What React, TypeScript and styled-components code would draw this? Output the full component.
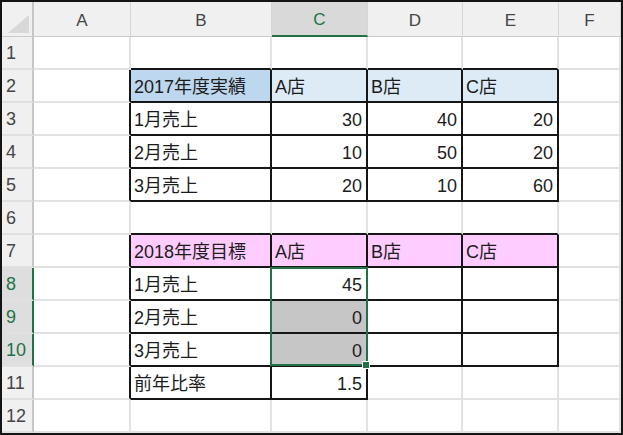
import React from "react";
import styled, { createGlobalStyle } from "styled-components";

const GREEN = "#217346";
const GRID = "#e2e2e2";
const INK = "#161616";

const GlobalStyle = createGlobalStyle`
  html, body {
    margin: 0;
    padding: 0;
    background: #ffffff;
  }
  * {
    box-sizing: border-box;
  }
`;

const Sheet = styled.div`
  position: relative;
  width: 623px;
  height: 435px;
  border: 2px solid #141414;
  display: grid;
  grid-template-columns: 32px 97px 141px 96px 95px 96px 62px;
  grid-template-rows: 35px repeat(12, 33px);
  background: #ffffff;
  overflow: hidden;
  font-family: "Liberation Sans", "Noto Sans CJK JP", sans-serif;
`;

const Corner = styled.div`
  background: #f0f0f0;
  border-right: 2px solid #c6c6c6;
  border-bottom: 1px solid #c9c9c9;
`;

const ColHeader = styled.div<{ $selected?: boolean }>`
  display: flex;
  align-items: center;
  justify-content: center;
  padding-top: 3px;
  background: ${(p) => (p.$selected ? "#d9d9d9" : "#f0f0f0")};
  border-right: 1px solid #d6d6d6;
  border-bottom: ${(p) =>
    p.$selected ? `2px solid ${GREEN}` : "1px solid #c9c9c9"};
  color: ${(p) => (p.$selected ? GREEN : "#454545")};
  font-size: 17px;
`;

const RowHeader = styled.div<{ $selected?: boolean }>`
  display: flex;
  align-items: center;
  padding: 2px 0 0 4px;
  background: ${(p) => (p.$selected ? "#dedede" : "#f0f0f0")};
  border-right: 2px solid ${(p) => (p.$selected ? GREEN : "#c6c6c6")};
  border-bottom: 2px solid #e0e0e0;
  color: ${(p) => (p.$selected ? GREEN : "#454545")};
  font-size: 18px;
`;

const Cell = styled.div<{
  $fill?: string;
  $num?: boolean;
  $edgeRight?: boolean;
  $edgeBottom?: boolean;
}>`
  display: flex;
  align-items: center;
  justify-content: ${(p) => (p.$num ? "flex-end" : "flex-start")};
  padding: 3px 4px 0 3px;
  background: ${(p) => p.$fill || "#ffffff"};
  border-right: 2px solid ${(p) => (p.$edgeRight ? INK : GRID)};
  border-bottom: 2px solid ${(p) => (p.$edgeBottom ? INK : GRID)};
  color: #1c1c1c;
  font-size: 18px;
  line-height: 1;
  white-space: nowrap;
`;

const Selection = styled.div`
  position: absolute;
  left: 268px;
  top: 265px;
  width: 98px;
  height: 99px;
  border: 2px solid ${GREEN};
  pointer-events: none;
`;

const FillHandle = styled.div`
  position: absolute;
  right: -4px;
  bottom: -5px;
  width: 8px;
  height: 8px;
  background: ${GREEN};
  border: 1px solid #ffffff;
`;

const COLS = ["A", "B", "C", "D", "E", "F"];

type CellData = { v: string | number; fill?: string };

const BLUE_DARK = "#bdd7ee";
const BLUE = "#ddebf7";
const PINK = "#ffccff";
const GRAY = "#c6c6c6";

const DATA: Record<string, CellData> = {
  B2: { v: "2017年度実績", fill: BLUE_DARK },
  C2: { v: "A店", fill: BLUE },
  D2: { v: "B店", fill: BLUE },
  E2: { v: "C店", fill: BLUE },
  B3: { v: "1月売上" },
  C3: { v: 30 },
  D3: { v: 40 },
  E3: { v: 20 },
  B4: { v: "2月売上" },
  C4: { v: 10 },
  D4: { v: 50 },
  E4: { v: 20 },
  B5: { v: "3月売上" },
  C5: { v: 20 },
  D5: { v: 10 },
  E5: { v: 60 },
  B7: { v: "2018年度目標", fill: PINK },
  C7: { v: "A店", fill: PINK },
  D7: { v: "B店", fill: PINK },
  E7: { v: "C店", fill: PINK },
  B8: { v: "1月売上" },
  C8: { v: 45 },
  B9: { v: "2月売上" },
  C9: { v: 0, fill: GRAY },
  B10: { v: "3月売上" },
  C10: { v: 0, fill: GRAY },
  B11: { v: "前年比率" },
  C11: { v: 1.5 },
};

// bordered ranges, column index 0 = A
const TABLES = [
  { r1: 2, r2: 5, c1: 1, c2: 4 },
  { r1: 7, r2: 10, c1: 1, c2: 4 },
  { r1: 11, r2: 11, c1: 1, c2: 2 },
];

const inTable = (r: number, c: number) =>
  TABLES.some((t) => r >= t.r1 && r <= t.r2 && c >= t.c1 && c <= t.c2);

const SELECTED_ROWS = [8, 9, 10];
const ROWS = Array.from({ length: 12 }, (_, i) => i + 1);

const CornerMark = () => (
  <svg width="30" height="34" viewBox="0 0 30 34">
    <polygon points="6,31 27,31 27,13" fill="#d8d8d8" />
  </svg>
);

const App: React.FC = () => {
  return (
    <>
      <GlobalStyle />
      <Sheet>
        <Corner>
          <CornerMark />
        </Corner>
        {COLS.map((c) => (
          <ColHeader key={c} $selected={c === "C"}>
            {c}
          </ColHeader>
        ))}
        {ROWS.map((r) => (
          <React.Fragment key={r}>
            <RowHeader $selected={SELECTED_ROWS.includes(r)}>{r}</RowHeader>
            {COLS.map((c, ci) => {
              const cell = DATA[`${c}${r}`];
              const here = inTable(r, ci);
              return (
                <Cell
                  key={c}
                  $fill={cell?.fill}
                  $num={typeof cell?.v === "number"}
                  $edgeRight={here || inTable(r, ci + 1)}
                  $edgeBottom={here || inTable(r + 1, ci)}
                >
                  {cell ? cell.v : ""}
                </Cell>
              );
            })}
          </React.Fragment>
        ))}
        <Selection>
          <FillHandle />
        </Selection>
      </Sheet>
    </>
  );
};

export default App;
